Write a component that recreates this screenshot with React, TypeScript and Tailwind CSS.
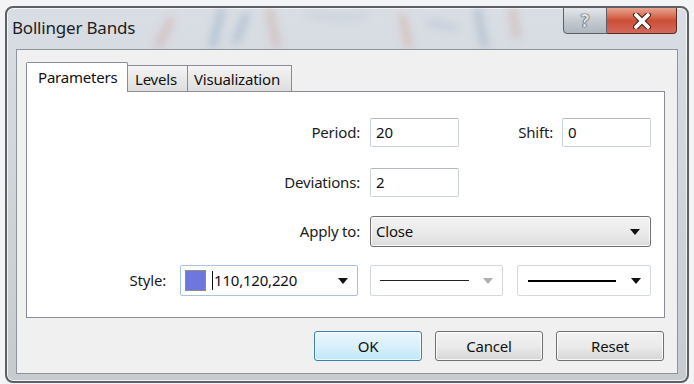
import React from 'react';

const Arrow = ({ color = '#111' }: { color?: string }) => (
  <svg width="10" height="6" viewBox="0 0 10 6" className="shrink-0">
    <path d="M0 0 L10 0 L5 6 Z" fill={color} />
  </svg>
);

const TextBox = ({ value, width }: { value: string; width: string }) => (
  <div className={`${width} h-[29px] bg-white border border-[#ccd3da] border-t-[#b5bac1] rounded-[2px] flex items-center pl-[5px] text-[#111]`}>
    {value}
  </div>
);

const Label = ({ text, width }: { text: string; width: string }) => (
  <div className={`${width} shrink-0 text-right text-[#1b1b1b]`}>{text}</div>
);

const DialogButton = ({ text, primary }: { text: string; primary?: boolean }) => (
  <button
    className={`w-[108px] h-[30px] rounded-[3px] border text-[15px] text-[#111] ${
      primary
        ? 'border-[#3c7fb1] bg-gradient-to-b from-[#eaf6fd] via-[#d9f0fc] to-[#bee6fd] shadow-[inset_0_0_0_1px_rgba(255,255,255,0.7)]'
        : 'border-[#707070] bg-gradient-to-b from-[#f2f2f2] via-[#ebebeb] to-[#d6d6d6] shadow-[inset_0_0_0_1px_rgba(255,255,255,0.8)]'
    }`}
  >
    {text}
  </button>
);

export default function App() {
  return (
    <div className="w-[694px] h-[384px] bg-[#f3f4f5] pt-[6px] px-[5px] font-['Noto_Sans',sans-serif] text-[15px] tracking-[-0.2px] overflow-hidden">
      <div className="h-[377px] rounded-[8px] border-2 border-[#5d6166] bg-gradient-to-b from-[#d9dee4] to-[#c6cbd0] flex flex-col shadow-[inset_0_0_0_1px_rgba(255,255,255,0.7)] overflow-hidden">
        {/* title bar */}
        <div className="h-[41px] flex relative">
          <svg className="absolute inset-0" width="684" height="41" viewBox="0 0 684 41">
            <defs>
              <filter id="blur" x="-20%" y="-20%" width="140%" height="140%">
                <feGaussianBlur stdDeviation="4" />
              </filter>
            </defs>
            <g filter="url(#blur)" opacity="0.4" strokeWidth="6" fill="none">
              <path d="M150 40 L165 10" stroke="#c98a7a" />
              <path d="M205 40 L215 0" stroke="#6b8fb8" />
              <path d="M228 35 L240 5" stroke="#6b8fb8" />
              <path d="M262 0 L270 40" stroke="#c98a7a" />
              <path d="M300 6 L340 10 L360 6" stroke="#a9b5cc" strokeWidth="4" />
              <path d="M395 6 L402 40" stroke="#d38b75" />
              <path d="M420 14 L450 20" stroke="#8aa1c2" strokeWidth="4" />
              <path d="M470 0 L478 40" stroke="#6d8eb3" />
              <path d="M505 0 L510 30" stroke="#c98a7a" />
            </g>
          </svg>
          <div className="relative pl-[5px] pt-[11px] text-[17px] text-[#1e1e1e] leading-none">Bollinger Bands</div>
          <div className="relative ml-auto mr-[10px] flex h-[27px] -mt-px">
            <div className="w-[44px] h-full border border-[#5d6166] rounded-bl-[4px] bg-gradient-to-b from-[#e4e7ea] via-[#c5cbd2] to-[#aeb6bf] flex items-center justify-center">
              <span className="text-[17px] font-bold text-[#dfe3e8] leading-none [text-shadow:0_0_1px_#3c4248,0_0_1px_#3c4248,0_0_1px_#3c4248]">?</span>
            </div>
            <div className="w-[70px] h-full border border-l-0 border-[#5d2a22] rounded-br-[4px] bg-gradient-to-b from-[#e7a491] via-[#cd4e36] to-[#d2695a] flex items-center justify-center">
              <svg width="20" height="16" viewBox="0 0 20 16">
                <path d="M4 2 L16 14 M16 2 L4 14" stroke="#4a2620" strokeWidth="6" strokeLinecap="round" />
                <path d="M4 2 L16 14 M16 2 L4 14" stroke="#ffffff" strokeWidth="3.8" strokeLinecap="round" />
              </svg>
            </div>
          </div>
        </div>

        {/* client area */}
        <div className="mx-[9px] h-[325px] border border-[#8d949b] bg-[#f0f0f0] flex flex-col pl-[9px] pr-[12px] pt-[12px]">
          {/* tabs */}
          <div className="h-[29px] flex items-end">
            <div className="w-[102px] h-[30px] -mb-px relative z-10 bg-white border border-b-0 border-[#898c95] rounded-t-[2px] pl-[11px] pt-[3px] text-[#111]">
              Parameters
            </div>
            <div className="w-[60px] h-[26px] border border-l-0 border-b-0 border-[#898c95] bg-gradient-to-b from-[#f4f4f4] to-[#dedede] pl-[7px] pt-[2px] text-[#111]">
              Levels
            </div>
            <div className="w-[104px] h-[26px] border border-l-0 border-b-0 border-[#898c95] bg-gradient-to-b from-[#f4f4f4] to-[#dedede] pl-[6px] pt-[2px] text-[#111]">
              Visualization
            </div>
          </div>

          {/* panel */}
          <div className="h-[227px] border border-[#898c95] bg-white pt-[26px] flex flex-col">
            <div className="flex items-center">
              <Label text="Period:" width="w-[333px]" />
              <div className="w-[10px]" />
              <TextBox value="20" width="w-[89px]" />
              <Label text="Shift:" width="w-[94px]" />
              <div className="w-[9px]" />
              <TextBox value="0" width="w-[89px]" />
            </div>
            <div className="flex items-center mt-[21px]">
              <Label text="Deviations:" width="w-[333px]" />
              <div className="w-[10px]" />
              <TextBox value="2" width="w-[89px]" />
            </div>
            <div className="flex items-center mt-[19px]">
              <Label text="Apply to:" width="w-[333px]" />
              <div className="w-[10px]" />
              <div className="w-[281px] h-[31px] rounded-[3px] border border-[#707070] bg-gradient-to-b from-[#f3f3f3] via-[#ebebeb] to-[#dddddd] shadow-[inset_0_0_0_1px_rgba(255,255,255,0.8)] flex items-center pl-[5px] pr-[10px] text-[#111]">
                <span className="flex-1">Close</span>
                <Arrow />
              </div>
            </div>
            <div className="flex items-center mt-[18px]">
              <Label text="Style:" width="w-[139px]" />
              <div className="w-[14px]" />
              <div className="w-[178px] h-[31px] rounded-[2px] border border-[#a7c3e2] bg-white flex items-center pl-[4px] pr-[9px]">
                <div className="w-[21px] h-[21px] border border-[#8c8c8c] bg-[#6e78dc]" />
                <div className="w-[6px]" />
                <div className="w-px h-[19px] bg-[#111]" />
                <span className="flex-1 text-[#111] pl-px">110,120,220</span>
                <Arrow />
              </div>
              <div className="w-[12px]" />
              <div className="w-[133px] h-[31px] rounded-[2px] border border-[#d3d8de] bg-white flex items-center pl-[9px] pr-[9px]">
                <div className="w-[89px] h-px bg-[#222]" />
                <div className="flex-1" />
                <Arrow color="#b0b0b0" />
              </div>
              <div className="w-[14px]" />
              <div className="w-[134px] h-[31px] rounded-[2px] border border-[#d3d8de] bg-white flex items-center pl-[10px] pr-[9px]">
                <div className="w-[88px] h-[2px] bg-[#000]" />
                <div className="flex-1" />
                <Arrow />
              </div>
            </div>
          </div>

          {/* buttons */}
          <div className="flex justify-end gap-[13px] mt-[13px] mr-px">
            <DialogButton text="OK" primary />
            <DialogButton text="Cancel" />
            <DialogButton text="Reset" />
          </div>
        </div>
      </div>
    </div>
  );
}
